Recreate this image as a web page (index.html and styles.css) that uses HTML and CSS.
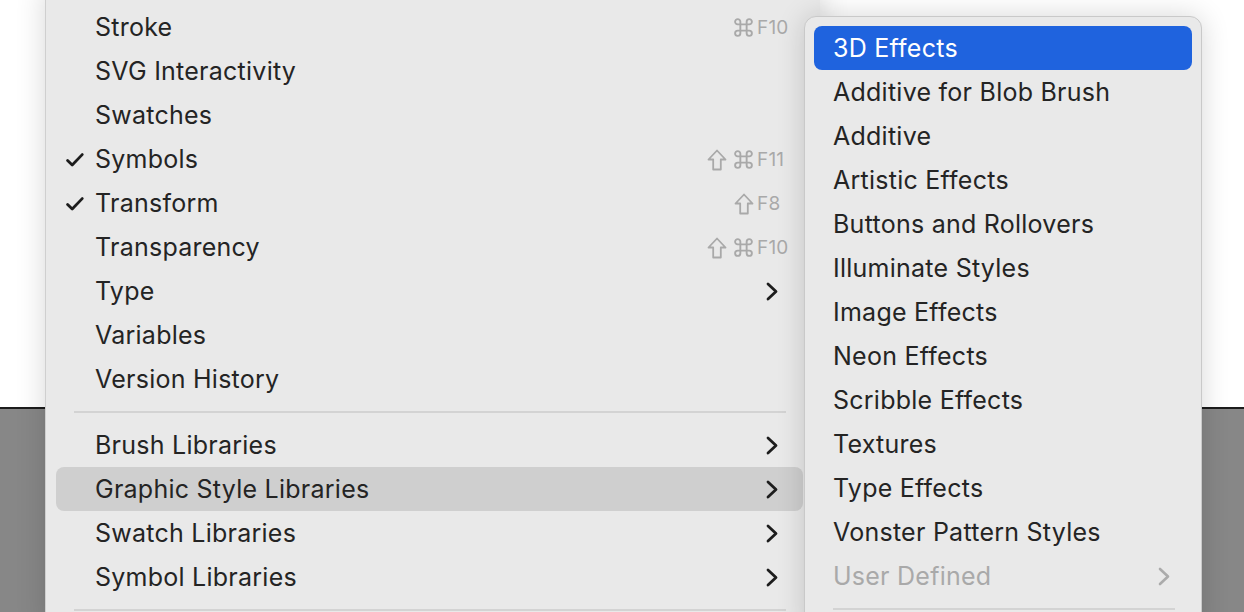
FILE: index.html
```html
<!DOCTYPE html>
<html lang="en">
<head>
    <meta charset="UTF-8">
    <meta name="viewport" content="width=device-width, initial-scale=1.0">
    <title>Window menu</title>
    <link rel="stylesheet" href="styles.css">
</head>
<body>
    <div class="desk">
        <div class="desk-top"></div>
        <div class="desk-bottom"></div>
    </div>

    <div class="menu main-menu">
        <div class="item">
            <span class="check"></span><span class="label">Stroke</span>
            <span class="keys"><span class="mods"><svg class="cmd" width="21" height="21" viewBox="0 0 20 20"><path d="M7 7 V4.5 A2.5 2.5 0 1 0 4.5 7 H15.5 A2.5 2.5 0 1 0 13 4.5 V15.5 A2.5 2.5 0 1 0 15.5 13 H4.5 A2.5 2.5 0 1 0 7 15.5 Z"/></svg></span><span class="key">F10</span></span>
        </div>
        <div class="item"><span class="check"></span><span class="label">SVG Interactivity</span></div>
        <div class="item"><span class="check"></span><span class="label">Swatches</span></div>
        <div class="item">
            <span class="check"><svg width="18" height="14" viewBox="0 0 18 14"><path d="M1.6 7.4 L6.2 12 L16.2 1.6" fill="none" stroke="#1d1d1d" stroke-width="2.8" stroke-linecap="round" stroke-linejoin="round"/></svg></span>
            <span class="label">Symbols</span>
            <span class="keys"><span class="mods"><svg class="shift" width="20" height="22" viewBox="0 0 20 22"><path d="M10 1.5 L18.5 10.5 H13.8 V20.5 H6.2 V10.5 H1.5 Z"/></svg><svg class="cmd" width="21" height="21" viewBox="0 0 20 20"><path d="M7 7 V4.5 A2.5 2.5 0 1 0 4.5 7 H15.5 A2.5 2.5 0 1 0 13 4.5 V15.5 A2.5 2.5 0 1 0 15.5 13 H4.5 A2.5 2.5 0 1 0 7 15.5 Z"/></svg></span><span class="key">F11</span></span>
        </div>
        <div class="item">
            <span class="check"><svg width="18" height="14" viewBox="0 0 18 14"><path d="M1.6 7.4 L6.2 12 L16.2 1.6" fill="none" stroke="#1d1d1d" stroke-width="2.8" stroke-linecap="round" stroke-linejoin="round"/></svg></span>
            <span class="label">Transform</span>
            <span class="keys"><span class="mods"><svg class="shift" width="20" height="22" viewBox="0 0 20 22"><path d="M10 1.5 L18.5 10.5 H13.8 V20.5 H6.2 V10.5 H1.5 Z"/></svg></span><span class="key">F8</span></span>
        </div>
        <div class="item">
            <span class="check"></span><span class="label">Transparency</span>
            <span class="keys"><span class="mods"><svg class="shift" width="20" height="22" viewBox="0 0 20 22"><path d="M10 1.5 L18.5 10.5 H13.8 V20.5 H6.2 V10.5 H1.5 Z"/></svg><svg class="cmd" width="21" height="21" viewBox="0 0 20 20"><path d="M7 7 V4.5 A2.5 2.5 0 1 0 4.5 7 H15.5 A2.5 2.5 0 1 0 13 4.5 V15.5 A2.5 2.5 0 1 0 15.5 13 H4.5 A2.5 2.5 0 1 0 7 15.5 Z"/></svg></span><span class="key">F10</span></span>
        </div>
        <div class="item"><span class="check"></span><span class="label">Type</span><span class="arrow"><svg width="12" height="19" viewBox="0 0 12 19"><path d="M2 2 L10 9.5 L2 17" fill="none" stroke="#1d1d1d" stroke-width="2.8" stroke-linecap="round" stroke-linejoin="round"/></svg></span></div>
        <div class="item"><span class="check"></span><span class="label">Variables</span></div>
        <div class="item"><span class="check"></span><span class="label">Version History</span></div>
        <div class="sep"></div>
        <div class="item"><span class="check"></span><span class="label">Brush Libraries</span><span class="arrow"><svg width="12" height="19" viewBox="0 0 12 19"><path d="M2 2 L10 9.5 L2 17" fill="none" stroke="#1d1d1d" stroke-width="2.8" stroke-linecap="round" stroke-linejoin="round"/></svg></span></div>
        <div class="item open"><span class="check"></span><span class="label">Graphic Style Libraries</span><span class="arrow"><svg width="12" height="19" viewBox="0 0 12 19"><path d="M2 2 L10 9.5 L2 17" fill="none" stroke="#1d1d1d" stroke-width="2.8" stroke-linecap="round" stroke-linejoin="round"/></svg></span></div>
        <div class="item"><span class="check"></span><span class="label">Swatch Libraries</span><span class="arrow"><svg width="12" height="19" viewBox="0 0 12 19"><path d="M2 2 L10 9.5 L2 17" fill="none" stroke="#1d1d1d" stroke-width="2.8" stroke-linecap="round" stroke-linejoin="round"/></svg></span></div>
        <div class="item"><span class="check"></span><span class="label">Symbol Libraries</span><span class="arrow"><svg width="12" height="19" viewBox="0 0 12 19"><path d="M2 2 L10 9.5 L2 17" fill="none" stroke="#1d1d1d" stroke-width="2.8" stroke-linecap="round" stroke-linejoin="round"/></svg></span></div>
        <div class="sep"></div>
    </div>

    <div class="menu sub-menu">
        <div class="item active"><span class="label">3D Effects</span></div>
        <div class="item"><span class="label">Additive for Blob Brush</span></div>
        <div class="item"><span class="label">Additive</span></div>
        <div class="item"><span class="label">Artistic Effects</span></div>
        <div class="item"><span class="label">Buttons and Rollovers</span></div>
        <div class="item"><span class="label">Illuminate Styles</span></div>
        <div class="item"><span class="label">Image Effects</span></div>
        <div class="item"><span class="label">Neon Effects</span></div>
        <div class="item"><span class="label">Scribble Effects</span></div>
        <div class="item"><span class="label">Textures</span></div>
        <div class="item"><span class="label">Type Effects</span></div>
        <div class="item"><span class="label">Vonster Pattern Styles</span></div>
        <div class="item disabled"><span class="label">User Defined</span><span class="arrow"><svg width="12" height="19" viewBox="0 0 12 19"><path d="M2 2 L10 9.5 L2 17" fill="none" stroke="#ababab" stroke-width="2.6" stroke-linecap="round" stroke-linejoin="round"/></svg></span></div>
        <div class="sep"></div>
    </div>
</body>
</html>
```

FILE: styles.css
```css
* {
    box-sizing: border-box;
}
body {
    margin: 0;
    height: 612px;
    overflow: hidden;
    font-family: Inter, "Noto Sans", sans-serif;
    color: #242424;
    background: #878787;
}
.desk {
    display: flex;
    flex-direction: column;
    height: 612px;
}
.desk-top {
    height: 409px;
    background: #ffffff;
    border-bottom: 2px solid #1c1c1c;
}
.desk-bottom {
    flex: 1;
    background: #878787;
}
.menu {
    position: absolute;
    background: #e9e9e9;
    box-shadow: 0 0 28px rgba(0, 0, 0, 0.16);
}
.main-menu {
    left: 45px;
    top: -12px;
    width: 775px;
    height: 640px;
    padding: 17px 10px 0 10px;
    border-left: 1px solid #cfcfcf;
}
.sub-menu {
    left: 804px;
    top: 16px;
    width: 398px;
    height: 620px;
    padding: 9px;
    border: 1px solid #c9c9c9;
    border-radius: 12px;
}
.item {
    display: flex;
    align-items: center;
    height: 44px;
    font-size: 25px;
    letter-spacing: 0.25px;
    border-radius: 8px;
}
.main-menu .item {
    width: 747px;
    padding: 0 17px 0 10px;
}
.sub-menu .item {
    padding: 0 22px 0 19px;
}
.check {
    width: 29px;
    display: flex;
    align-items: center;
    padding-top: 2px;
}
.keys {
    margin-left: auto;
    display: flex;
    align-items: center;
    color: #a9a9a9;
}
.mods {
    display: flex;
    align-items: center;
    gap: 6px;
    padding-top: 1px;
}
.mods svg {
    fill: none;
    stroke: #a9a9a9;
    stroke-width: 1.8;
    stroke-linejoin: round;
}
.key {
    width: 32px;
    padding-left: 3px;
    font-size: 19px;
    letter-spacing: 0.2px;
}
.arrow {
    margin-left: auto;
    margin-right: 8px;
    display: flex;
}
.item.open {
    background: #cfcfcf;
}
.item.active {
    background: #1f63de;
    color: #ffffff;
}
.item.disabled {
    color: #a9a9a9;
}
.sub-menu .item.disabled .arrow {
    margin-right: 0;
}
.sep {
    height: 22px;
    display: flex;
    align-items: center;
}
.sep::after {
    content: "";
    flex: 1;
    height: 2px;
    background: #d3d3d3;
}
.main-menu .sep {
    width: 747px;
    padding: 0 17px 0 18px;
}
.sub-menu .sep {
    padding: 0 17px 0 19px;
}
```
